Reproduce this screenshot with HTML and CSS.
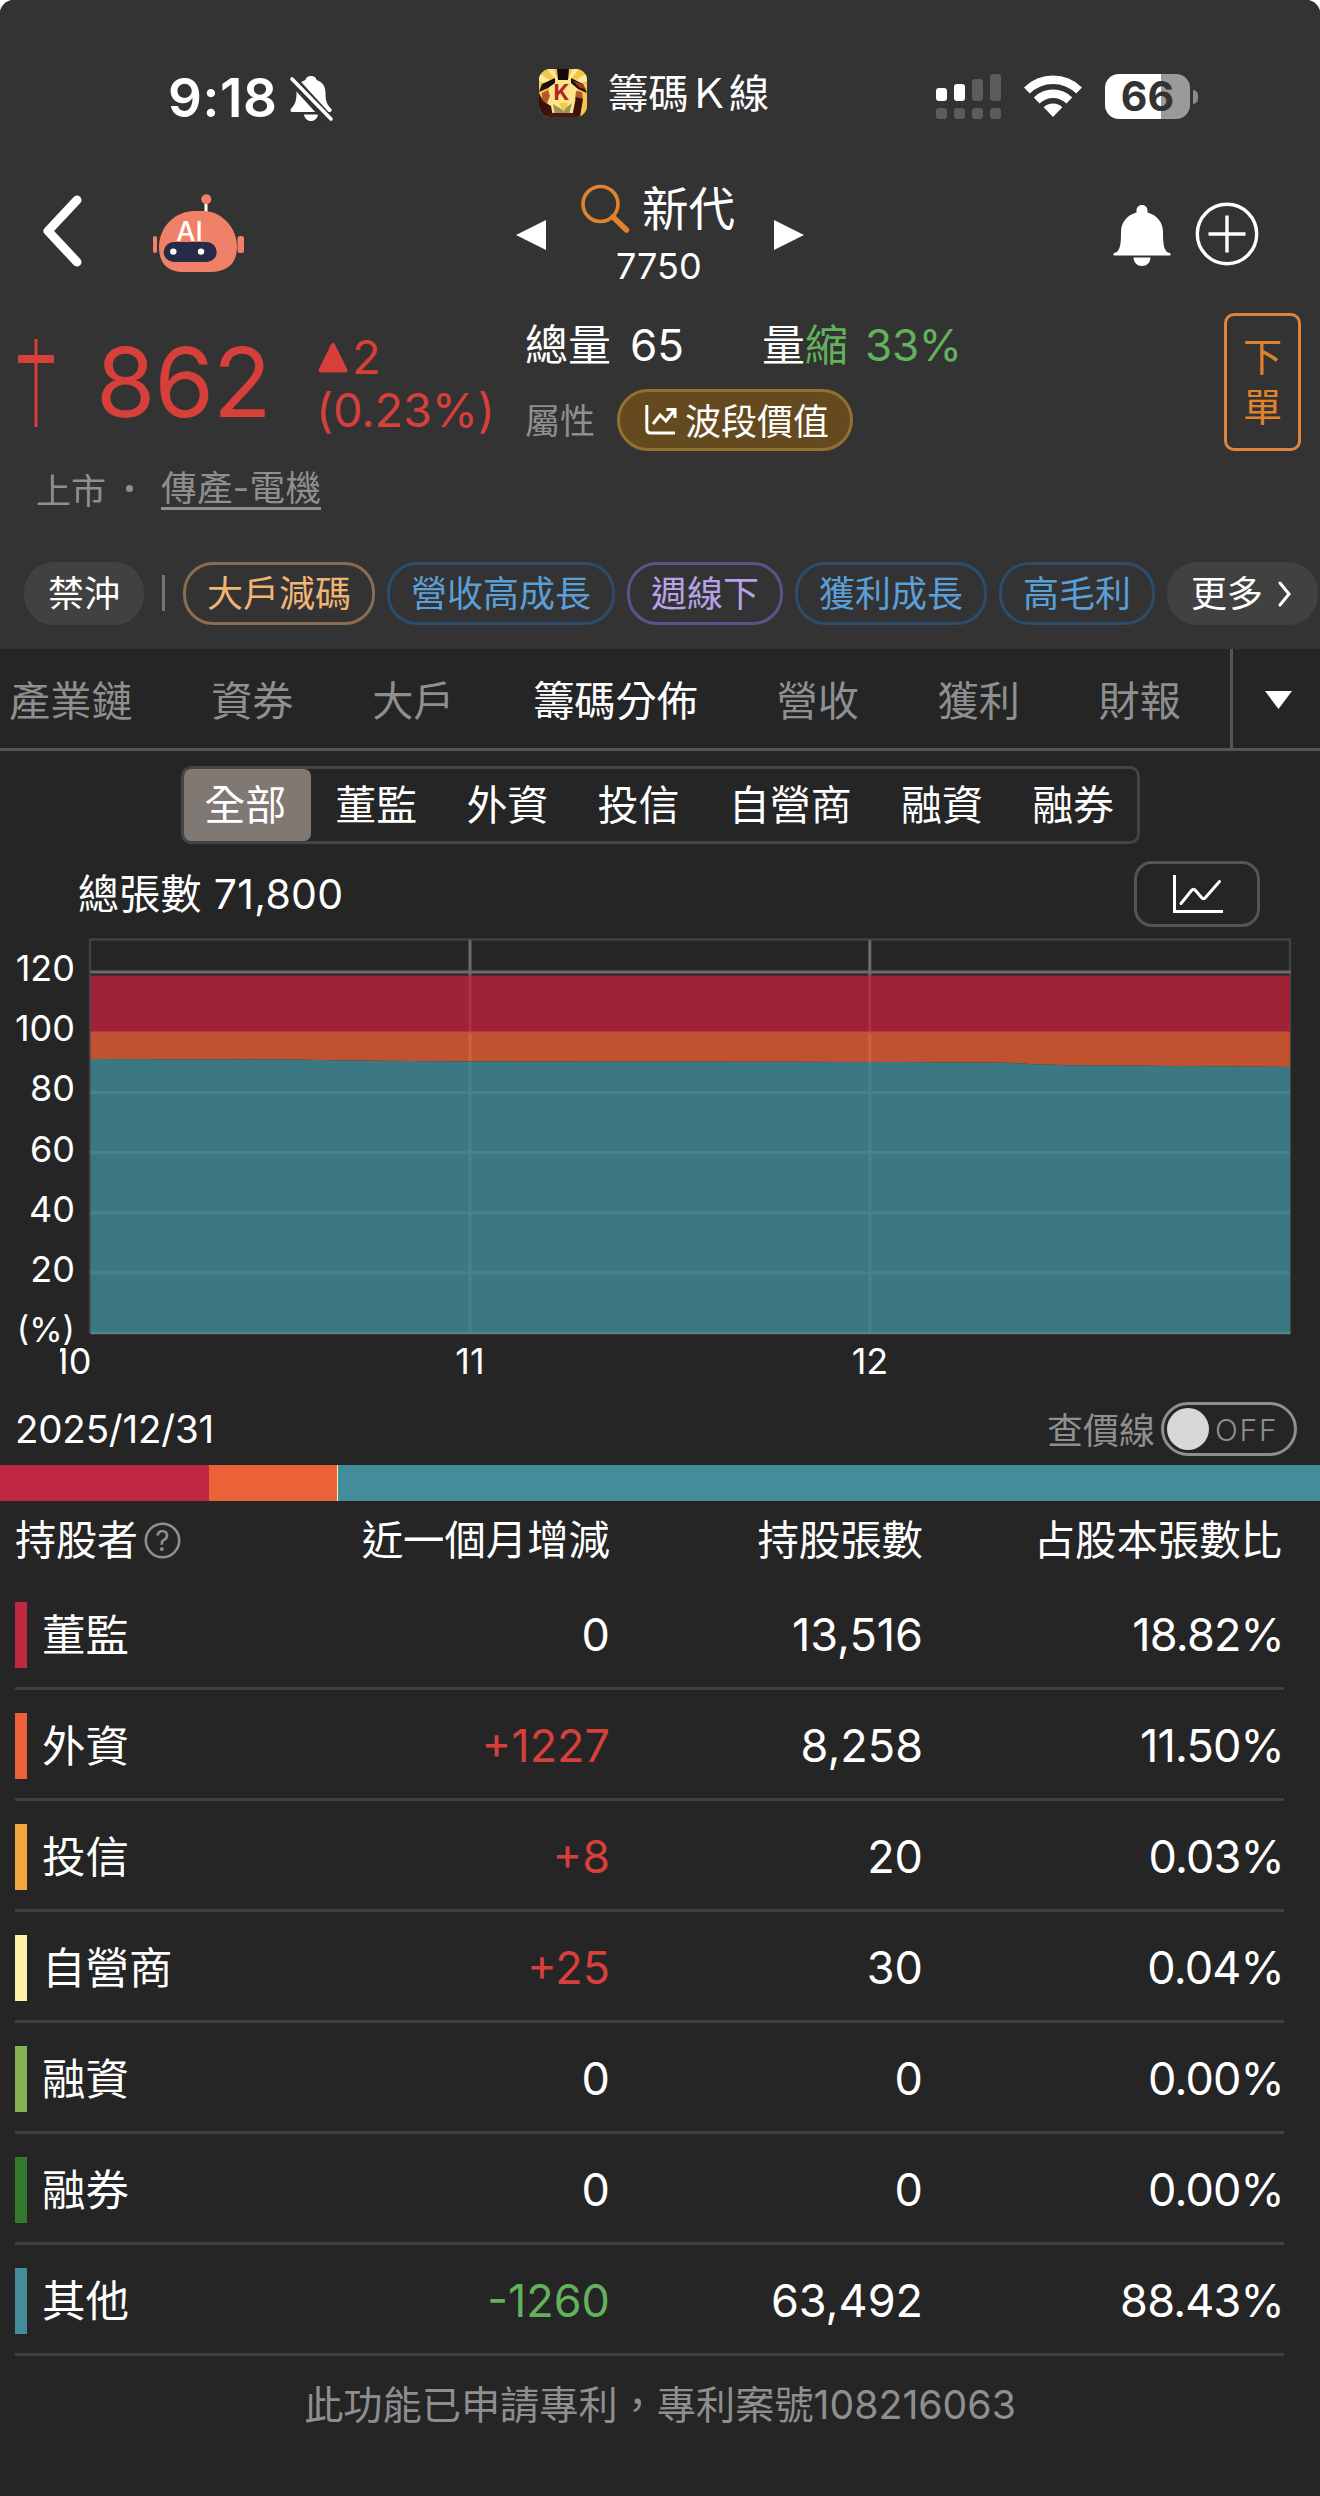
FILE: index.html
```html
<!DOCTYPE html>
<html lang="zh-Hant-TW">
<head>
<meta charset="utf-8">
<title>籌碼Ｋ線</title>
<link rel="stylesheet" href="styles.css">
</head>
<body>
<div class="app">
  <header class="top">
    <div class="status">
      <span class="clock">9:18</span>
      <svg class="mute" width="44" height="48" viewBox="0 0 44 48">
        <path d="M21 1c3 0 5 1.500 5.600 4C33 7 35.500 12 35.500 18c0 9 2 12 5.500 15.500 1.500 1.800.8 3.500-1.500 3.500H2.500C.3 37-.2 35 1.200 33.500 4.500 30 6.500 27 6.500 18 6.500 12 9 7 15.400 5 16 2.500 18 1 21 1zM14 39.500h14c-.5 4-3.500 6.500-7 6.500s-6.500-2.500-7-6.500z" fill="#fff"/>
        <path d="M-1 1 41 47" stroke="#333" stroke-width="10"/>
        <path d="M2 4 41 44" stroke="#fff" stroke-width="3.600" stroke-linecap="round"/>
      </svg>
      <svg class="logo" width="48" height="48" viewBox="0 0 48 48">
        <defs><clipPath id="lg"><rect width="48" height="48" rx="11"/></clipPath></defs>
        <g clip-path="url(#lg)">
          <rect width="48" height="48" fill="#f3c64b"/>
          <path d="M24 20 0 4v8zM24 20 8 0h6zM24 20 34 0h6zM24 20 48 4v8z" fill="#fdeaa0"/>
          <path d="M11 14 24 9l14 5 1 20-7 14H15L9 34z" fill="#fbe58a"/>
          <path d="M18 0h12l-1 11H19z" fill="#120a08"/>
          <path d="M16 9 3 15l-3 8 9-4 7-5zM32 9l12 6 4 9-9-4-7-6z" fill="#20100c"/>
          <path d="M34 12l9 3 4 5-6-1z" fill="#a83d22"/>
          <path d="M3 24l6-3 2 6-3 7-5-2zM37 22l6 1 1 8-4 4-4-5z" fill="#b5572e"/>
          <path d="M0 24l4 8 8 5 2 11H4L0 40zM37 28l7 2-3 18h-8z" fill="#3a120f"/>
          <path d="M14 35l10 6 9-7-3 12H16z" fill="#9a9455"/>
          <path d="M20 34h9l-4 9z" fill="#f6c644"/>
          <path d="M10 44h26v4H10z" fill="#4a1714"/>
        </g>
        <text x="22.500" y="31" class="logo-k">K</text>
      </svg>
      <span class="app-name">籌碼Ｋ線</span>
      <svg class="signal" width="66" height="46" viewBox="0 0 66 46">
        <g fill="#fff"><rect y="14" width="11" height="13" rx="3"/><rect x="18" y="10" width="11" height="17" rx="3"/></g>
        <g fill="#5c5c5c"><rect x="36" y="5" width="11" height="22" rx="3"/><rect x="54" width="11" height="27" rx="3"/><rect y="34" width="11" height="11" rx="3"/><rect x="18" y="34" width="11" height="11" rx="3"/><rect x="36" y="34" width="11" height="11" rx="3"/><rect x="54" y="34" width="11" height="11" rx="3"/></g>
      </svg>
      <svg class="wifi" width="58" height="42" viewBox="0 0 58 42">
        <path d="M0 12.500a41 41 0 0 1 58 0l-5.800 6a33 33 0 0 0-46.400 0zM9.800 22.500a27 27 0 0 1 38.400 0l-5.800 6a19 19 0 0 0-26.800 0zM19.700 32.300a13.500 13.500 0 0 1 18.600 0L29 42z" fill="#fff"/>
      </svg>
      <div class="battery"><span class="level">66</span></div>
    </div>

    <div class="nav">
      <svg class="back" width="44" height="72" viewBox="0 0 44 72"><path d="M38 5 9 36l29 31" fill="none" stroke="#fff" stroke-width="9" stroke-linecap="round" stroke-linejoin="round"/></svg>
      <svg class="robot" width="92" height="80" viewBox="0 0 92 80">
        <path d="M53 9v12" stroke="#fff" stroke-width="3"/>
        <circle cx="53.300" cy="7.300" r="5" fill="#f08168"/>
        <path d="M42 19h8c18 0 34 16 34 36 0 16-9 25-27 25H30C14 80 6 71 6 55c0-20 16-36 36-36z" fill="#f08168"/>
        <rect x="0" y="44" width="4" height="17" rx="2" fill="#f08168"/><rect x="84.500" y="44" width="6.500" height="17" rx="2.500" fill="#f08168"/>
        <rect x="10.700" y="50" width="53" height="20" rx="10" fill="#272b47"/>
        <circle cx="20.300" cy="59.600" r="3.200" fill="#fff"/><circle cx="48" cy="59.600" r="3.200" fill="#fff"/>
        <text x="36.500" y="49" class="ai">AI</text>
      </svg>
      <svg class="prev" width="30" height="30" viewBox="0 0 30 30"><path d="M30 0v30L0 15z" fill="#fff"/></svg>
      <div class="stock">
        <div class="stock-name">
          <svg width="50" height="50" viewBox="0 0 50 50"><circle cx="19.500" cy="20" r="17.500" fill="none" stroke="#e0822f" stroke-width="3.600"/><path d="M32 33 45.500 46" stroke="#e0822f" stroke-width="5.500" stroke-linecap="round"/></svg>
          <span>新代</span>
        </div>
        <div class="stock-code">7750</div>
      </div>
      <svg class="next" width="30" height="30" viewBox="0 0 30 30"><path d="M0 0v30l30-15z" fill="#fff"/></svg>
      <svg class="bell" width="58" height="62" viewBox="0 0 58 62"><path d="M29 0c3.500 0 5.500 2.500 5.500 5.500v2C44 10 50 17.500 50 27c0 13 1 18 5 20.500 3.500.500 3 3 1.500 3h-55c-1.500 0-2-2.500 1.500-3C7 45 8 40 8 27 8 17.500 14 10 23.500 7.500v-2C23.500 2.500 25.500 0 29 0zM20.500 52.500h17c0 5-4 8.500-8.500 8.500s-8.500-3.500-8.500-8.500z" fill="#fff"/></svg>
      <svg class="add" width="64" height="64" viewBox="0 0 64 64"><g fill="none" stroke="#fff" stroke-width="3.400"><circle cx="32" cy="32" r="29.700"/><path d="M13.500 32h37M32 13.500v37"/></g></svg>
    </div>

    <div class="quote">
      <svg class="candle" width="36" height="88" viewBox="0 0 36 88"><path d="M16.500 0h3v88h-3zM0 16h36v8H0z" fill="#d63f3a"/></svg>
      <div class="price">862</div>
      <div class="change">
        <div class="delta"><svg width="30" height="31" viewBox="0 0 30 31"><path d="M15 3 2.500 28.500h25z" fill="#d63f3a" stroke="#d63f3a" stroke-width="4" stroke-linejoin="round"/></svg><span>2</span></div>
        <div class="pct">(0.23%)</div>
      </div>
      <div class="facts">
        <div class="volume"><span class="cjk">總量</span><span class="num">65</span><span class="cjk ratio">量<b>縮</b></span><span class="num drop">33%</span></div>
        <div class="attr">
          <span class="attr-label">屬性</span>
          <span class="attr-pill"><svg width="32" height="30" viewBox="0 0 32 30"><path d="M1.800 0v24q0 4 4 4H30M8 19l7-9 6 6 8.500-11M21.500 4.500H30V13" fill="none" stroke="#fff" stroke-width="3"/></svg>波段價值</span>
        </div>
      </div>
      <div class="order"><span>下</span><span>單</span></div>
    </div>

    <div class="market"><span>上市</span><i></i><u>傳產-電機</u></div>

    <div class="chips">
      <span class="chip solid">禁沖</span><i class="bar"></i>
      <span class="chip amber">大戶減碼</span><span class="chip blue">營收高成長</span><span class="chip violet">週線下</span><span class="chip blue">獲利成長</span><span class="chip blue">高毛利</span>
      <span class="chip solid more">更多<svg width="14" height="26" viewBox="0 0 14 26"><path d="M2 2l9 11-9 11" fill="none" stroke="#fff" stroke-width="3" stroke-linecap="round"/></svg></span>
    </div>
  </header>

  <nav class="tabs">
    <div class="tab-list"><span>產業鏈</span><span>資券</span><span>大戶</span><span class="on">籌碼分佈</span><span>營收</span><span>獲利</span><span>財報</span></div>
    <div class="tab-more"><svg width="27" height="18" viewBox="0 0 27 18"><path d="M0 0h27L13.500 18z" fill="#fff"/></svg></div>
  </nav>

  <div class="segment"><span class="on">全部</span><span>董監</span><span>外資</span><span>投信</span><span>自營商</span><span>融資</span><span>融券</span></div>

  <div class="total">
    <span>總張數 71,800</span>
    <div class="chart-btn"><svg width="50" height="40" viewBox="0 0 50 40"><path d="M1.500 0v36.500H50" fill="none" stroke="#fff" stroke-width="3"/><path d="M8 28.500l10.500-13q2-2.500 4 0l6 7q2 2.500 4 0L46.500 6.500" fill="none" stroke="#fff" stroke-width="3" stroke-linecap="round"/></svg></div>
  </div>

  <div class="chart">
    <div class="y-axis"><span>120</span><span>100</span><span>80</span><span>60</span><span>40</span><span>20</span><span class="unit">(%)</span></div>
    <svg class="plot" width="1202" height="397" viewBox="89.500 938 1202 397">
      <path d="M90.500 1333V939.500h1200V1333" fill="none" stroke="#424242" stroke-width="2.500"/>
      <path d="M91 972h1200M470.500 940v36M870.300 940v36" stroke="#6b6b6b" stroke-width="3"/>
      <path d="M91 975.500H1290.500V1033H91z" fill="#9f2239"/>
      <path d="M91 1032.500H1290.500V1067L1180 1066 1070 1065.200 1030 1064 1010 1062.700 900 1062 470 1061.500 350 1060.500 290 1059.500 91 1059z" fill="#c1522f"/>
      <path d="M91 1059 290 1059.500 350 1060.500 470 1061.500 900 1062 1010 1062.700 1030 1064 1070 1065.200 1180 1066 1290.500 1067V1333H91z" fill="#3c7883"/>
      <path d="M91 1092.500H1290M91 1152.600H1290M91 1212.700H1290M91 1272.800H1290M470.500 1062V1333M870.300 1062V1333" stroke="#46838f" stroke-width="3"/>
      <path d="M470.500 976v56M870.300 976v56" stroke="#ae3049" stroke-width="3"/>
      <path d="M470.500 1033v28M870.300 1033v29" stroke="#cd6140" stroke-width="3"/>
      <path d="M91 1032.500H1290" stroke="#c2504a" stroke-width="2"/>
      <path d="M91 1333.300H1291" stroke="#61848b" stroke-width="2"/>
    </svg>
    <div class="x-axis"><span class="x10">10</span><span class="x11">11</span><span class="x12">12</span></div>
  </div>

  <div class="date-row">
    <span class="date">2025/12/31</span>
    <span class="toggle-label">查價線</span>
    <div class="toggle"><i></i><span>OFF</span></div>
  </div>

  <div class="share"><i class="c-director" style="flex-grow:18.820"></i><i class="c-foreign" style="flex-grow:11.500"></i><i class="c-dealer" style="flex-grow:0.100"></i><i class="c-other" style="flex-grow:88.430"></i></div>

  <div class="table">
    <div class="row head"><div class="who">持股者<svg width="37" height="37" viewBox="0 0 37 37"><circle cx="18.500" cy="18.500" r="16.700" fill="none" stroke="#8f8f8f" stroke-width="2.600"/><text x="18.500" y="28.500" class="q">?</text></svg></div><div>近一個月增減</div><div>持股張數</div><div>占股本張數比</div></div>
    <div class="row"><div class="who"><i class="c-director"></i>董監</div><div>0</div><div>13,516</div><div class="ratio-cell">18.82%</div></div>
    <div class="row"><div class="who"><i class="c-foreign"></i>外資</div><div class="up">+1227</div><div>8,258</div><div class="ratio-cell">11.50%</div></div>
    <div class="row"><div class="who"><i class="c-trust"></i>投信</div><div class="up">+8</div><div>20</div><div class="ratio-cell">0.03%</div></div>
    <div class="row"><div class="who"><i class="c-dealer"></i>自營商</div><div class="up">+25</div><div>30</div><div class="ratio-cell">0.04%</div></div>
    <div class="row"><div class="who"><i class="c-margin"></i>融資</div><div>0</div><div>0</div><div class="ratio-cell">0.00%</div></div>
    <div class="row"><div class="who"><i class="c-short"></i>融券</div><div>0</div><div>0</div><div class="ratio-cell">0.00%</div></div>
    <div class="row"><div class="who"><i class="c-other"></i>其他</div><div class="down">-1260</div><div>63,492</div><div class="ratio-cell">88.43%</div></div>
  </div>

  <footer>此功能已申請專利，專利案號108216063</footer>
</div>
</body>
</html>
```
FILE: styles.css
```css
* { box-sizing: border-box; }
body { margin: 0; background: #fff; }
svg { display: block; flex: none; overflow: visible; }
i, em { font-style: normal; }
span, div { white-space: nowrap; }

.app {
  width: 1320px;
  height: 2496px;
  overflow: hidden;
  border-radius: 14px 14px 0 0;
  background: #252525;
  color: #fff;
  font-family: Inter, "Noto Sans CJK TC", sans-serif;
  font-weight: 400;
}

.top { height: 649px; background: #333; }

/* status bar */
.status { display: flex; align-items: flex-start; height: 160px; padding-top: 68px; }
.clock { width: 122px; margin-left: 168px; font-size: 53px; font-weight: 600; line-height: 60px; letter-spacing: 0.6px; }
.mute { margin-top: 7px; }
.logo { margin: 1px 0 0 205px; }
.logo-k { font: 700 22px Inter, sans-serif; fill: #b3261f; text-anchor: middle; }
.app-name { width: 328px; margin-left: 21px; font-size: 40.300px; line-height: 52px; }
.signal { margin: 6px 0 0; }
.wifi { margin: 7px 0 0 22px; }
.battery {
  display: flex;
  justify-content: center;
  position: relative;
  width: 85px;
  height: 45px;
  margin: 6px 0 0 23px;
  border-radius: 14px;
  background: linear-gradient(90deg, #fff 56px, #9a9a9a 56px);
}
.battery::after {
  content: "";
  position: absolute;
  left: 88px;
  top: 16px;
  width: 5px;
  height: 14px;
  border-radius: 0 5px 5px 0;
  background: #8a8a8a;
}
.level { color: #333; font-size: 41px; font-weight: 700; line-height: 45px; }

/* navigation */
.nav { display: flex; align-items: flex-start; height: 140px; }
.back { margin: 35px 0 0 39px; }
.robot { margin: 32px 0 0 70px; }
.ai { font: 500 27px Inter, sans-serif; fill: #fff; text-anchor: middle; }
.prev { margin: 60px 0 0 271px; }
.stock { width: 228px; padding-top: 20px; }
.stock-name { display: flex; padding-left: 35px; height: 58px; }
.stock-name svg { margin-top: 4px; }
.stock-name span { margin-left: 11px; font-size: 46.500px; line-height: 58px; }
.stock-code { height: 56px; padding-left: 70px; font-size: 36px; line-height: 56px; }
.next { margin-top: 60px; }
.bell { margin: 45px 0 0 309px; }
.add { margin: 42px 0 0 24px; }

/* quote */
.quote { display: flex; height: 160px; }
.candle { margin: 39px 0 0 18px; }
.price { width: 219px; margin-left: 42px; color: #d63f3a; font-size: 96px; line-height: 164px; letter-spacing: -1px; }
.change { width: 208px; padding: 30px 0 0 3px; color: #d63f3a; font-size: 47px; }
.delta { display: flex; height: 53px; line-height: 53px; }
.delta svg { margin: 12px 4px 0 0; }
.pct { margin-left: -2px; line-height: 53px; letter-spacing: -0.2px; }
.facts { width: 701px; padding: 16px 0 0 2px; }
.volume { display: flex; height: 60px; font-size: 43px; line-height: 59px; }
.num { margin-left: 19px; font-size: 44px; }
.ratio { margin-left: 78px; }
.ratio b { font-weight: 400; color: #62b25d; }
.drop { margin-left: 17px; color: #62b25d; letter-spacing: -0.3px; }
.attr { display: flex; align-items: center; height: 62px; margin-top: 13px; }
.attr-label { width: 92px; padding-bottom: 3px; color: #8f8f8f; font-size: 35px; }
.attr-pill {
  display: flex;
  align-items: center;
  gap: 8px;
  width: 236px;
  height: 62px;
  padding: 0 0 2px 25px;
  border: 3px solid #93702f;
  border-radius: 31px;
  background: #654a20;
  font-size: 36px;
}
.attr-pill svg { margin-top: 2px; }
.order {
  display: flex;
  flex-direction: column;
  align-items: center;
  justify-content: center;
  width: 77px;
  height: 138px;
  margin-top: 13px;
  border: 3px solid #dd8440;
  border-radius: 10px;
  color: #e0822f;
  font-size: 39px;
  line-height: 50px;
}

.market { display: flex; align-items: center; height: 62px; padding: 0 0 6px 36px; color: #8f8f8f; font-size: 35px; }
.market i { width: 7px; height: 7px; margin: 0 28px 0 20px; border-radius: 50%; background: #8f8f8f; }
.market u { height: 39px; border-bottom: 3px solid #8f8f8f; font-size: 35.500px; line-height: 36px; letter-spacing: 0.400px; text-decoration: none; margin-top: 4px; }

.chips { display: flex; gap: 12px; padding: 40px 0 0 24px; }
.chip { display: flex; align-items: center; height: 63px; padding: 1px 21px 0; border: 3px solid; border-radius: 30px; font-size: 36px; line-height: 56px; }
.chip.solid { border-color: #414141; background: #414141; }
.chip.more { gap: 15px; width: 151px; }
.bar { width: 3px; height: 36px; margin: 13px 6px 0; background: #757575; }
.amber { color: #f2b473; border-color: #8a6d50; }
.blue { color: #5b9fd8; border-color: #2c4d6a; }
.violet { color: #b6a2e6; border-color: #605088; }

/* tabs */
.tabs { display: flex; height: 102px; border-bottom: 3px solid #555; }
.tab-list { display: flex; gap: 78.600px; width: 1230px; padding-left: 9px; color: #8f8f8f; font-size: 41.200px; line-height: 104px; }
.tabs .on { color: #fff; }
.tab-more { display: flex; flex: 1; padding: 42px 0 0 32px; border-left: 3px solid #555; }

.segment { display: flex; width: 959px; height: 78px; margin: 15px 0 0 181px; border: 3px solid #444; border-radius: 10px; font-size: 41px; line-height: 73px; }
.segment span { padding: 0 24.600px; }
.segment .on { padding: 0 24.300px 0 20.300px; border-radius: 7px; background: #7f7873; }

.total { display: flex; justify-content: space-between; height: 83px; padding: 17px 60px 0 78px; font-size: 41px; line-height: 66px; letter-spacing: 0.300px; }
.chart-btn { display: flex; width: 126px; height: 66px; padding: 11px 0 0 36px; border: 3px solid #555; border-radius: 18px; }

/* chart */
.chart { display: grid; grid-template-columns: 75px 1fr; grid-template-rows: 397px 62px; margin-top: 11px; font-size: 36px; }
.y-axis { height: 397px; text-align: right; line-height: 60.200px; }
.y-axis span { display: block; }
.y-axis .unit { font-size: 34px; line-height: 62px; }
.plot { margin-left: 14px; }
.x-axis { grid-column: 1 / 3; display: flex; line-height: 52px; padding-left: 60px; }
/* the first tick label runs under the left edge of the axis */
.x10 { width: 30px; height: 52px; overflow: hidden; text-indent: -6px; }
.x11 { margin-left: 330px; width: 100px; text-align: center; }
.x12 { margin-left: 300px; width: 100px; text-align: center; }

.date-row { display: flex; align-items: center; height: 72px; margin-top: -4px; padding-left: 15px; font-size: 38.500px; }
.date { width: 1032px; letter-spacing: -0.200px; }
.toggle-label { width: 114px; padding-bottom: 2px; color: #8f8f8f; font-size: 36px; }
.toggle { display: flex; align-items: center; width: 136px; height: 54px; padding-left: 3px; border: 3px solid #8f8f8f; border-radius: 27px; }
.toggle i { width: 42px; height: 42px; margin-right: 6px; border-radius: 50%; background: #d8d8d8; }
.toggle span { padding-top: 2px; color: #8f8f8f; font-size: 30px; letter-spacing: 1.800px; font-weight: 300; }

.share { display: flex; height: 36px; }
.share i { flex-basis: 0; }
.c-director { background: #bf2840; }
.c-foreign { background: #eb6138; }
.c-trust { background: #f2a73d; }
.c-dealer { background: #fdf3a7; }
.c-margin { background: #84b354; }
.c-short { background: #347a2e; }
.c-other { background: #438d9b; }

/* holders */
.table { padding: 0 36px 0 15px; }
.row { display: grid; grid-template-columns: 260px 335px 313px 1fr; height: 111px; padding-top: 4px; border-bottom: 3px solid #404040; font-size: 45px; line-height: 104px; text-align: right; }
.row .who { display: flex; align-items: center; font-size: 43.500px; }
.row .who i { width: 12px; height: 66px; margin-right: 15px; }
.row .ratio-cell { letter-spacing: -0.800px; }
.row.head { height: 78px; padding: 0 2px 0 0; border: 0; font-size: 41.400px; line-height: 79px; }
.head .who { font-size: 41px; }
.head svg { margin-left: 6px; }
.q { font: 400 28px Inter, sans-serif; fill: #8f8f8f; text-anchor: middle; }
.up { color: #d63f3a; }
.down { color: #62b25d; }

footer { height: 96px; color: #8f8f8f; font-size: 39.200px; line-height: 97px; text-align: center; }
```
